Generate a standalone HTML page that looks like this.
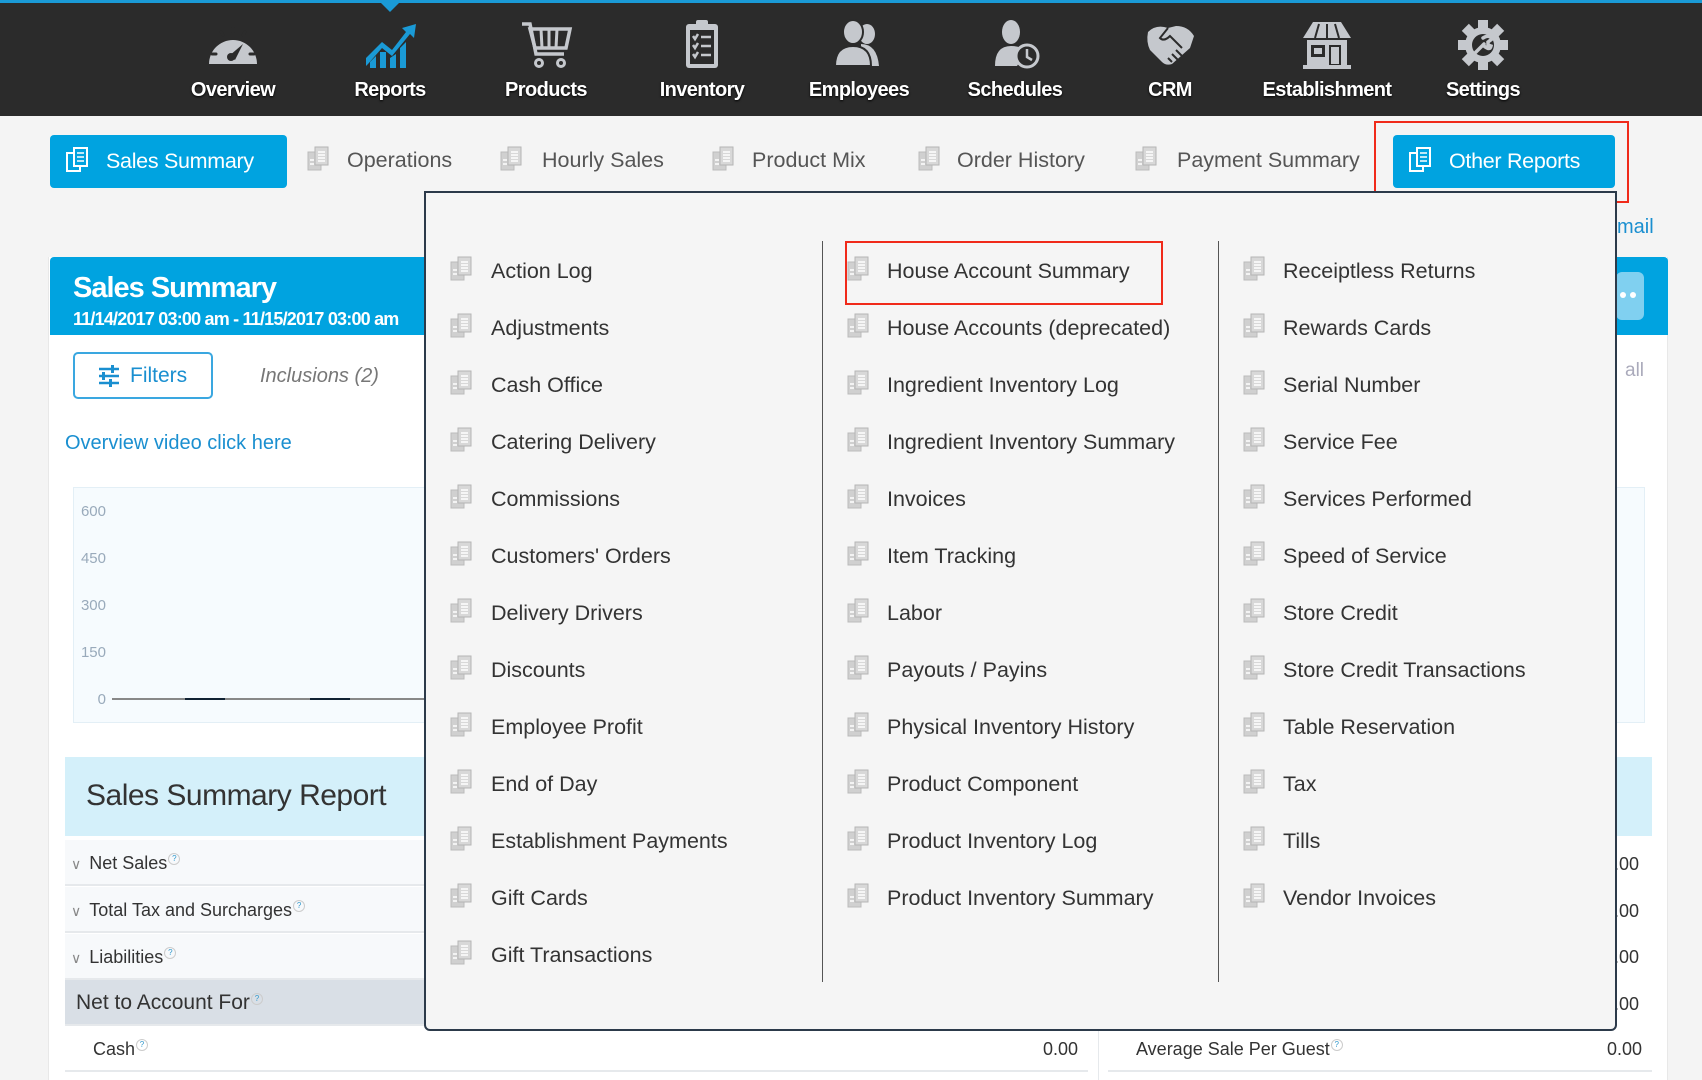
<!DOCTYPE html>
<html><head><meta charset="utf-8"><style>
*{margin:0;padding:0;box-sizing:border-box}
body{width:1702px;height:1080px;overflow:hidden;background:#f4f4f4;font-family:"Liberation Sans",Arial,sans-serif;position:relative;color:#333}
.a{position:absolute}
.nav{left:0;top:0;width:1702px;height:116px;background:#2b2b2b;border-top:3px solid #1a9ad6}
.ni{position:absolute;top:18px;width:156px;text-align:center;color:#fff;font-weight:bold;font-size:20px;letter-spacing:-0.6px;text-shadow:0 1px 2px #000}
.ni svg{display:block;margin:0 auto 9px;height:52px}
.tab{position:absolute;top:148px;font-size:21.5px;color:#555;white-space:nowrap}
.btn{position:absolute;background:#00a3e0;border-radius:4px;color:#fff;font-size:21.5px;letter-spacing:-0.3px}
.it{position:absolute;font-size:21.5px;color:#333;white-space:nowrap;line-height:26px}
.di{position:absolute;width:22px;height:26px}
.row{position:absolute;left:65px;width:1023px;height:46px;border-bottom:2px solid #e6e9ec;font-size:18px;color:#333;line-height:46px}
.rr{position:absolute;left:1108px;width:544px;height:46px;border-bottom:2px solid #e6e9ec;font-size:18px;line-height:46px}
.q{display:inline-block;width:12px;height:12px;border-radius:50%;border:1px solid #ccc;font-size:8px;line-height:10px;text-align:center;color:#39c;vertical-align:8px;margin-left:1px}
.ch{color:#888;font-size:14px;margin:0 8px 0 6px}
</style></head><body>
<div class="a nav"></div>
<div class="a" style="left:380px;top:2px;width:0;height:0;border-left:10px solid transparent;border-right:10px solid transparent;border-top:10px solid #1a9ad6"></div>

<div class="ni" style="left:155px"><svg viewBox="0 0 56 52" width="56"><path d="M4 46 A24 24 0 1 1 52 46 Z" fill="#c5c8cd"/><g stroke="#2b2b2b" stroke-width="3" stroke-linecap="round"><line x1="28" y1="10" x2="28" y2="14"/><line x1="16" y1="14" x2="18" y2="17"/><line x1="40" y1="14" x2="38" y2="17"/><line x1="9" y1="24" x2="12" y2="26"/><line x1="47" y1="24" x2="44" y2="26"/><line x1="7" y1="36" x2="11" y2="36"/><line x1="49" y1="36" x2="45" y2="36"/></g><path d="M24 38 L38 26 L30 42 Z" fill="#2b2b2b"/><circle cx="26" cy="39" r="4" fill="#2b2b2b"/></svg>Overview</div>
<div class="ni" style="left:312px"><svg viewBox="0 0 56 52" width="56"><path d="M4 48 L4 40 L20 24 L30 32 L44 14 L40 10 L54 6 L52 20 L48 16 L30 38 L20 30 L6 46 Z" fill="#1a9ad6"/><path d="M8 50 L8 44 L14 38 L14 50 ZM18 50 L18 34 L24 34 L24 50ZM28 50 L28 40 L34 36 L34 50ZM38 50 L38 30 L44 24 L44 50Z" fill="#1a9ad6"/></svg>Reports</div>
<div class="ni" style="left:468px"><svg viewBox="0 0 56 52" width="56"><path d="M4 6 L12 6 L18 36 L46 36" fill="none" stroke="#c5c8cd" stroke-width="3.5"/><path d="M12 11 L52 11 L48 30 L17 30 Z" fill="none" stroke="#c5c8cd" stroke-width="3.5"/><g stroke="#c5c8cd" stroke-width="3"><line x1="23" y1="11" x2="24" y2="30"/><line x1="31" y1="11" x2="31" y2="30"/><line x1="39" y1="11" x2="38" y2="30"/></g><circle cx="21" cy="45" r="3.5" fill="none" stroke="#c5c8cd" stroke-width="3"/><circle cx="43" cy="45" r="3.5" fill="none" stroke="#c5c8cd" stroke-width="3"/></svg>Products</div>
<div class="ni" style="left:624px"><svg viewBox="0 0 56 52" width="56"><rect x="12" y="6" width="32" height="44" rx="3" fill="#c5c8cd"/><rect x="16" y="12" width="24" height="34" fill="#2b2b2b"/><rect x="22" y="2" width="12" height="8" rx="2" fill="#c5c8cd"/><g stroke="#c5c8cd" stroke-width="2.5" fill="none"><path d="M19 18l2 3 3-5M19 27l2 3 3-5M19 36l2 3 3-5"/><line x1="27" y1="19" x2="37" y2="19"/><line x1="27" y1="28" x2="37" y2="28"/><line x1="27" y1="37" x2="37" y2="37"/></g></svg>Inventory</div>
<div class="ni" style="left:781px"><svg viewBox="0 0 56 52" width="56"><ellipse cx="36" cy="16" rx="8" ry="10" fill="#c5c8cd"/><path d="M30 26 Q46 26 48 48 L30 48Z" fill="#c5c8cd"/><ellipse cx="22" cy="14" rx="10" ry="12" fill="#c5c8cd" stroke="#2b2b2b" stroke-width="2"/><path d="M4 48 Q4 28 22 28 Q40 28 40 48 Z" fill="#c5c8cd" stroke="#2b2b2b" stroke-width="2"/></svg>Employees</div>
<div class="ni" style="left:937px"><svg viewBox="0 0 56 52" width="56"><ellipse cx="24" cy="14" rx="9" ry="12" fill="#c5c8cd"/><path d="M8 48 Q8 28 24 28 Q36 28 38 36 L30 48Z" fill="#c5c8cd"/><circle cx="40" cy="38" r="11" fill="#2b2b2b" stroke="#c5c8cd" stroke-width="3"/><path d="M40 31 L40 39 L45 42" stroke="#c5c8cd" stroke-width="2.5" fill="none"/></svg>Schedules</div>
<div class="ni" style="left:1092px"><svg viewBox="0 0 56 52" width="56"><path d="M6 14 Q14 6 26 10 L34 8 Q46 8 52 18 L48 30 L30 46 Q24 48 20 44 L8 32 Q4 24 6 14Z" fill="#c5c8cd"/><g stroke="#2b2b2b" stroke-width="2" fill="none"><path d="M26 10 L18 20 Q22 24 28 18 L40 30"/><path d="M30 36 L36 42M26 40 L30 44M34 32 L40 38"/></g></svg>CRM</div>
<div class="ni" style="left:1249px"><svg viewBox="0 0 56 52" width="56"><path d="M14 4 L42 4 L52 20 L4 20 Z" fill="#c5c8cd"/><g stroke="#2b2b2b" stroke-width="2"><line x1="20" y1="6" x2="16" y2="20"/><line x1="28" y1="6" x2="28" y2="20"/><line x1="36" y1="6" x2="40" y2="20"/></g><rect x="8" y="22" width="40" height="26" fill="#c5c8cd"/><rect x="12" y="27" width="14" height="12" fill="#2b2b2b"/><rect x="15" y="30" width="8" height="6" fill="#c5c8cd"/><rect x="30" y="27" width="12" height="21" fill="#2b2b2b"/><rect x="32" y="29" width="8" height="17" fill="#c5c8cd"/><rect x="4" y="47" width="48" height="4" fill="#c5c8cd"/></svg>Establishment</div>
<div class="ni" style="left:1405px"><svg viewBox="0 0 56 52" width="56"><g fill="#c5c8cd"><circle cx="28" cy="27" r="18"/><g transform="translate(28 27)"><rect x="-5" y="-25" width="10" height="10"/><rect x="-5" y="15" width="10" height="10"/><rect x="-25" y="-5" width="10" height="10"/><rect x="15" y="-5" width="10" height="10"/><g transform="rotate(45)"><rect x="-5" y="-25" width="10" height="10"/><rect x="-5" y="15" width="10" height="10"/><rect x="-25" y="-5" width="10" height="10"/><rect x="15" y="-5" width="10" height="10"/></g></g></g><circle cx="28" cy="27" r="11" fill="#2b2b2b"/><path d="M20 35 L29 26 M28 20 Q34 16 37 21 L33 24 L33 27 L36 28 Q35 33 29 28" stroke="#c5c8cd" stroke-width="3.5" fill="none" stroke-linecap="round"/></svg>Settings</div>

<!-- tabs -->
<div class="btn" style="left:50px;top:135px;width:237px;height:53px;line-height:53px;padding-left:56px">Sales Summary</div>
<div class="btn" style="left:1393px;top:135px;width:222px;height:53px;line-height:53px;padding-left:56px">Other Reports</div>
<div class="a" style="left:1374px;top:121px;width:255px;height:82px;border:2px solid #f02a1a"></div>

<div class="tab" style="left:347px">Operations</div>
<div class="tab" style="left:542px">Hourly Sales</div>
<div class="tab" style="left:752px">Product Mix</div>
<div class="tab" style="left:957px">Order History</div>
<div class="tab" style="left:1177px">Payment Summary</div>

<!-- main panel behind -->
<div class="a" style="left:48px;top:257px;width:1620px;height:823px;background:#fff;border-left:1px solid #e8e8e8;border-right:1px solid #e8e8e8"></div>
<div class="a" style="left:50px;top:257px;width:1618px;height:78px;background:#00a3e0;border-radius:4px 4px 0 0"></div>
<div class="a" style="left:1616px;top:272px;width:28px;height:48px;background:#80d0f0;border-radius:6px"></div>
<div class="a" style="left:1620px;top:292px;width:6px;height:6px;border-radius:50%;background:#fff"></div>
<div class="a" style="left:1630px;top:292px;width:6px;height:6px;border-radius:50%;background:#fff"></div>
<div class="a" style="left:73px;top:272px;color:#fff;font-weight:bold;font-size:29px;letter-spacing:-1px">Sales Summary</div>
<div class="a" style="left:73px;top:309px;color:#fff;font-weight:bold;font-size:18px;letter-spacing:-0.8px;white-space:nowrap">11/14/2017 03:00 am - 11/15/2017 03:00 am</div>
<div class="a" style="left:73px;top:352px;width:140px;height:47px;border:2px solid #3aa7e0;border-radius:5px;color:#1a8fd0;font-size:21px;line-height:43px;padding-left:55px">Filters</div>
<svg class="a" style="left:98px;top:365px" width="22" height="22" viewBox="0 0 22 22"><g stroke="#1a8fd0" stroke-width="2.5"><line x1="1" y1="4" x2="21" y2="4"/><line x1="1" y1="11" x2="21" y2="11"/><line x1="1" y1="18" x2="21" y2="18"/></g><g fill="#1a8fd0"><rect x="13" y="0" width="3" height="8"/><rect x="4" y="7" width="3" height="8"/><rect x="11" y="14" width="3" height="8"/></g></svg>
<div class="a" style="left:260px;top:365px;color:#777;font-style:italic;font-size:20px">Inclusions (2)</div>
<div class="a" style="left:65px;top:432px;color:#1a8fd0;font-size:20px">Overview video click here</div>
<div class="a" style="left:1617px;top:216px;color:#1a8fd0;font-size:20px">mail</div>
<div class="a" style="left:1625px;top:360px;color:#aab;font-size:19px">all</div>
<div class="a" style="left:73px;top:487px;width:1572px;height:236px;background:#f6fbfe;border:1px solid #e3eff6"></div>
<div class="a" style="left:80px;top:488px;color:#9ab;font-size:15px;line-height:47px;width:26px;text-align:right">600<br>450<br>300<br>150<br>0</div>
<div class="a" style="left:112px;top:698px;width:320px;height:2px;background:#888"></div>
<div class="a" style="left:185px;top:698px;width:40px;height:2px;background:#123"></div>
<div class="a" style="left:310px;top:698px;width:40px;height:2px;background:#123"></div>
<div class="a" style="left:65px;top:757px;width:1587px;height:79px;background:#d4f0fa"></div>
<div class="a" style="left:86px;top:779px;font-size:30px;color:#333;letter-spacing:-0.5px">Sales Summary Report</div>
<div class="row" style="top:840px;background:#f7f9fb"><span class="ch">∨</span>Net Sales<span class="q">?</span></div>
<div class="row" style="top:887px;background:#f7f9fb"><span class="ch">∨</span>Total Tax and Surcharges<span class="q">?</span></div>
<div class="row" style="top:934px;background:#f7f9fb"><span class="ch">∨</span>Liabilities<span class="q">?</span></div>
<div class="row" style="top:980px;background:#d9dfe6;font-size:21px;padding-left:11px">Net to Account For<span class="q">?</span></div>
<div class="row" style="top:1026px;padding-left:28px">Cash<span class="q">?</span><span style="position:absolute;right:10px">0.00</span></div>
<div class="a" style="left:1098px;top:1026px;width:1px;height:54px;background:#e6e9ec"></div>
<div class="rr" style="top:1026px;padding-left:28px">Average Sale Per Guest<span class="q">?</span><span style="position:absolute;right:10px">0.00</span></div>
<div class="a" style="left:1614px;top:841px;font-size:18px;line-height:46.5px">.00<br>.00<br>.00<br>.00</div>

<!-- dropdown -->
<div class="a" style="left:424px;top:191px;width:1193px;height:840px;background:#f5f5f5;border:2px solid #2c3a4a;border-radius:0 0 6px 6px"></div>
<div class="a" style="left:822px;top:241px;width:1px;height:741px;background:#555"></div>
<div class="a" style="left:1218px;top:241px;width:1px;height:741px;background:#555"></div>
<div class="a" style="left:845px;top:241px;width:318px;height:64px;border:2px solid #f02a1a"></div>

<div id="items"></div>

<svg width="0" height="0" style="position:absolute"><defs><symbol id="d" viewBox="0 0 22 26"><rect x="1" y="6" width="13" height="18" fill="#d0d0d0" stroke="#bbb"/><rect x="8" y="1" width="13" height="18" fill="#d8d8d8" stroke="#b5b5b5"/><g stroke="#fff" stroke-width="1.5"><line x1="11" y1="6" x2="18" y2="6"/><line x1="11" y1="9" x2="18" y2="9"/><line x1="11" y1="12" x2="18" y2="12"/><line x1="11" y1="15" x2="18" y2="15"/></g><line x1="3" y1="14" x2="7" y2="14" stroke="#fff" stroke-width="1.5"/><line x1="3" y1="18" x2="7" y2="18" stroke="#fff" stroke-width="1.5"/></symbol><symbol id="w" viewBox="0 0 22 26"><rect x="1" y="6" width="13" height="18" fill="#00a3e0" stroke="#fff" stroke-width="2"/><rect x="8" y="1" width="13" height="18" fill="#00a3e0" stroke="#fff" stroke-width="2"/><g stroke="#fff" stroke-width="1.5"><line x1="11" y1="6" x2="18" y2="6"/><line x1="11" y1="10" x2="18" y2="10"/><line x1="11" y1="14" x2="18" y2="14"/></g></symbol></defs></svg>
<svg class="di" style="left:66px;top:147px"><use href="#w"/></svg>
<svg class="di" style="left:1409px;top:147px"><use href="#w"/></svg>
<svg class="di" style="left:307px;top:146px"><use href="#d"/></svg>
<svg class="di" style="left:500px;top:146px"><use href="#d"/></svg>
<svg class="di" style="left:712px;top:146px"><use href="#d"/></svg>
<svg class="di" style="left:918px;top:146px"><use href="#d"/></svg>
<svg class="di" style="left:1135px;top:146px"><use href="#d"/></svg>

<script>
var cols=[[450,491,["Action Log","Adjustments","Cash Office","Catering Delivery","Commissions","Customers' Orders","Delivery Drivers","Discounts","Employee Profit","End of Day","Establishment Payments","Gift Cards","Gift Transactions"]],
[847,887,["House Account Summary","House Accounts (deprecated)","Ingredient Inventory Log","Ingredient Inventory Summary","Invoices","Item Tracking","Labor","Payouts / Payins","Physical Inventory History","Product Component","Product Inventory Log","Product Inventory Summary"]],
[1243,1283,["Receiptless Returns","Rewards Cards","Serial Number","Service Fee","Services Performed","Speed of Service","Store Credit","Store Credit Transactions","Table Reservation","Tax","Tills","Vendor Invoices"]]];
var h="";cols.forEach(function(c){c[2].forEach(function(t,i){var y=271+57*i;h+='<svg class="di" style="left:'+c[0]+'px;top:'+(y-15)+'px"><use href="#d"/></svg><div class="it" style="left:'+c[1]+'px;top:'+(y-13)+'px">'+t+'</div>';});});
document.getElementById("items").innerHTML=h;
</script>
</body></html>
